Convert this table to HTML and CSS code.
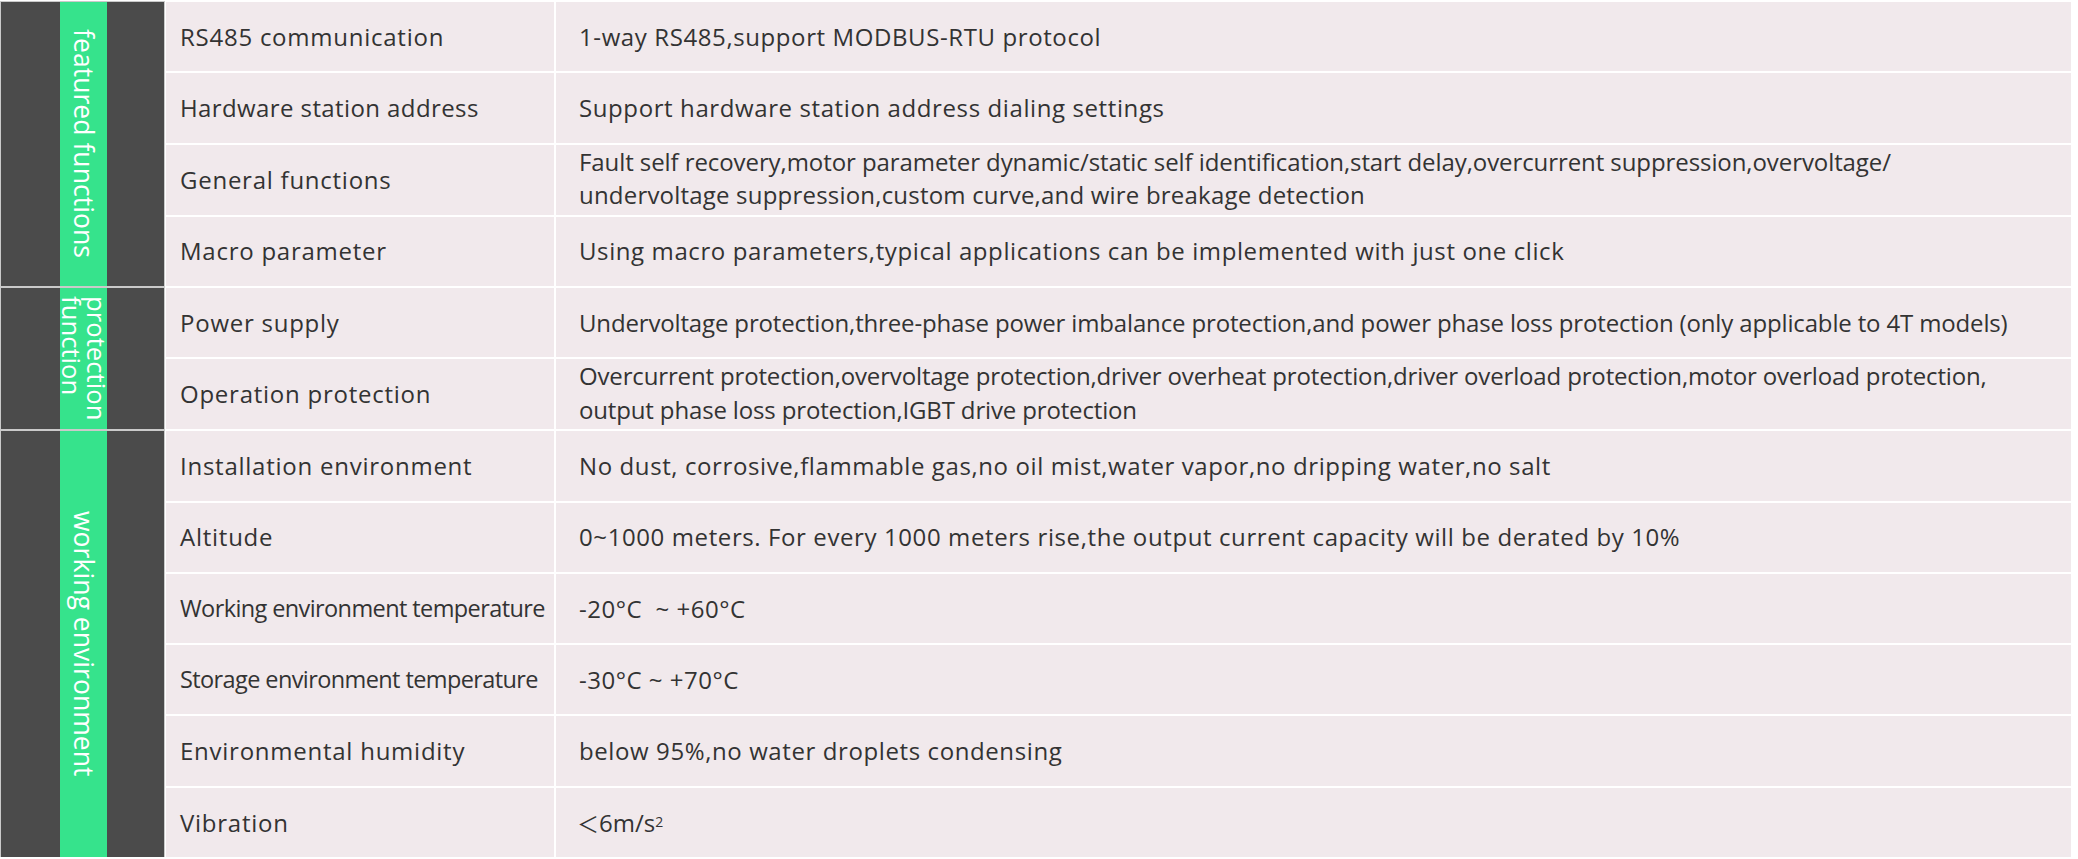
FILE: index.html
```html
<!DOCTYPE html>
<html lang="en">
<head>
<meta charset="utf-8">
<title>Specifications</title>
<link rel="stylesheet" href="styles.css">
</head>
<body>
<div class="spec">
  <div class="group g4"><div class="stripe"><span class="vtext">featured functions</span></div></div>
  <div class="label">RS485 communication</div>
  <div class="value">1-way RS485,support MODBUS-RTU protocol</div>
  <div class="label narrow">Hardware station address</div>
  <div class="value">Support hardware station address dialing settings</div>
  <div class="label">General functions</div>
  <div class="value multi"><span class="lines"><span class="ln tight1">Fault self recovery,motor parameter dynamic/static self identification,start delay,overcurrent suppression,overvoltage/</span><span class="ln tight2">undervoltage suppression,custom curve,and wire breakage detection</span></span></div>
  <div class="label">Macro parameter</div>
  <div class="value">Using macro parameters,typical applications can be implemented with just one click</div>

  <div class="group g2"><div class="stripe"><span class="vtext tight">protection<br>function</span></div></div>
  <div class="label">Power supply</div>
  <div class="value condensed">Undervoltage protection,three-phase power imbalance protection,and power phase loss protection (only applicable to 4T models)</div>
  <div class="label">Operation protection</div>
  <div class="value multi condensed">Overcurrent protection,overvoltage protection,driver overheat protection,driver overload protection,motor overload protection,<br>output phase loss protection,IGBT drive protection</div>

  <div class="group g6"><div class="stripe"><span class="vtext">working environment</span></div></div>
  <div class="label">Installation environment</div>
  <div class="value">No dust, corrosive,flammable gas,no oil mist,water vapor,no dripping water,no salt</div>
  <div class="label">Altitude</div>
  <div class="value">0~1000 meters. For every 1000 meters rise,the output current capacity will be derated by 10%</div>
  <div class="label fit">Working environment temperature</div>
  <div class="value temp">-20°C&nbsp; ~ +60°C</div>
  <div class="label fit">Storage environment temperature</div>
  <div class="value temp">-30°C ~ +70°C</div>
  <div class="label">Environmental humidity</div>
  <div class="value">below 95%,no water droplets condensing</div>
  <div class="label">Vibration</div>
  <div class="value vib"><span class="lt">＜</span>6m/s<sup class="sq">2</sup></div>
</div>
</body>
</html>
```
FILE: styles.css
```css
html, body {
  margin: 0;
  padding: 0;
  background: #ffffff;
}

body {
  font-family: "Open Sans", "Noto Sans", "Noto Sans CJK SC", sans-serif;
  color: #333333;
}

.spec {
  margin: 2px 7px 0 1px;
  height: 855px;
  display: grid;
  grid-template-columns: 163px 388px 1fr;
  grid-template-rows: repeat(12, 1fr);
  column-gap: 2px;
  row-gap: 2px;
}

.group {
  grid-column: 1;
  background: #4b4b4b;
  box-shadow: 0 0 0 1px #cacaca;
  display: flex;
  padding-left: 59px;
}
.g4 { grid-row: span 4; }
.g2 { grid-row: span 2; }
.g6 { grid-row: span 6; }

.stripe {
  width: 47px;
  background: #36e38c;
  display: flex;
  align-items: center;
  justify-content: center;
}

.vtext {
  writing-mode: vertical-rl;
  color: #ffffff;
  font-size: 26.6px;
  line-height: 32px;
  white-space: nowrap;
}
.vtext.tight {
  font-size: 25.7px;
  line-height: 25px;
}

.label, .value {
  background: #f1e9ec;
  display: flex;
  align-items: center;
  font-size: 24px;
  line-height: 33.5px;
}

.label {
  padding-left: 14px;
  white-space: nowrap;
  letter-spacing: 0.75px;
}
.label.narrow {
  letter-spacing: 0.4px;
}
.label.fit {
  font-size: 23.5px;
  letter-spacing: -0.6px;
}

.value {
  padding-left: 23px;
  letter-spacing: 0.6px;
  white-space: nowrap;
}
.value.multi {
  padding-bottom: 3px;
}
.lines {
  display: flex;
  flex-direction: column;
}
.ln.tight1 {
  letter-spacing: -0.08px;
}
.ln.tight2 {
  letter-spacing: 0.2px;
}
.value.condensed {
  letter-spacing: -0.15px;
}
.value.temp {
  letter-spacing: 0.5px;
}

.value.vib {
  padding-left: 21px;
  letter-spacing: 0;
}
.lt {
  font-family: "Noto Sans CJK SC", sans-serif;
  font-size: 22px;
}
.sq {
  font-size: 14px;
  line-height: 0;
  vertical-align: 10px;
}
```
